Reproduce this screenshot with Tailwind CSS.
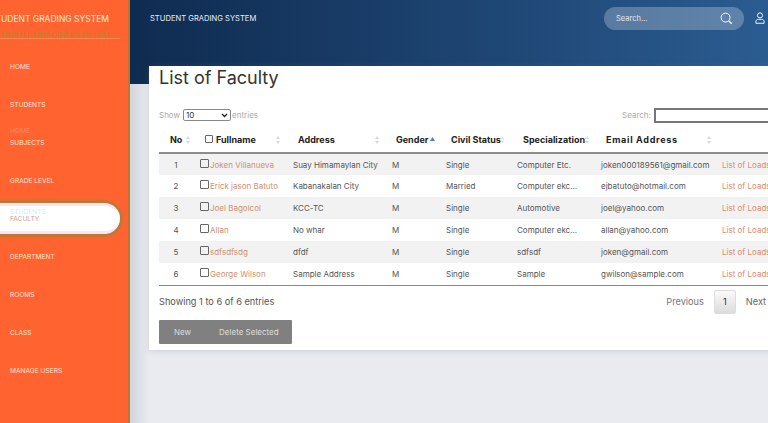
<!DOCTYPE html>
<html><head><meta charset="utf-8"><script src="https://cdn.jsdelivr.net/npm/@tailwindcss/browser@4"></script></head>
<body class="m-0 overflow-hidden">
<div class="flex w-[768px] h-[423px] overflow-hidden bg-[#e9ebf1] font-['Inter','Liberation_Sans',sans-serif] text-[#666]">
<aside class="relative z-10 w-[130px] shrink-0 h-full overflow-hidden bg-[#ff6430] border-r-2 border-[#b5773a] text-white">
  <div class="w-[130px] -ml-[10px] h-[39px] pt-[12px] border-b border-[#f58a50]">
    <p class="text-[8.5px] leading-[14px] whitespace-nowrap text-[#ffe6d8]">STUDENT GRADING SYSTEM</p>
    <p class="text-[8.5px] leading-[14px] mt-[2px] whitespace-nowrap text-[#c8802f]">STUDENT GRADING SYSTEM</p>
  </div>
  <nav class="text-[6.6px] text-[#ffe3d6] leading-[10px]">
    <a class="flex items-center h-[38px] pl-[10px] mt-[9px]">HOME</a>
    <a class="flex items-center h-[38px] pl-[10px]">STUDENTS</a>
    <a class="relative flex items-center h-[38px] pl-[10px]"><span class="absolute left-[10px] top-[2px] text-[#ff8a5a]">HOME</span>SUBJECTS</a>
    <a class="flex items-center h-[38px] pl-[10px]">GRADE LEVEL</a>
    <div class="flex items-center h-[38px]">
      <a class="relative flex items-center h-[31px] w-[120px] -mt-[2px] pt-[2px] pl-[10px] rounded-r-[16px] bg-white text-[#c9a48f] border-y-[3px] border-y-[#fde3f5] shadow-[0_0_2px_3px_#bb7a36]"><span class="absolute left-[10px] top-[1px] text-[#bdf4fb]">STUDENTS</span>FACULTY</a>
    </div>
    <a class="flex items-center h-[38px] pl-[10px]">DEPARTMENT</a>
    <a class="flex items-center h-[38px] pl-[10px]">ROOMS</a>
    <a class="flex items-center h-[38px] pl-[10px]">CLASS</a>
    <a class="flex items-center h-[38px] pl-[10px]">MANAGE USERS</a>
  </nav>
</aside>
<main class="relative flex-1 min-w-0 h-full">
  <header class="h-[84px] bg-gradient-to-r from-[#0f2b50] to-[#2b5c91] flex items-start pl-[20px] text-white">
    <span class="mt-[13px] text-[7.6px] leading-[12px] whitespace-nowrap text-[#e8eef5]">STUDENT GRADING SYSTEM</span>
    <div class="ml-auto mt-[7px] w-[140px] h-[23px] rounded-full bg-white/25 flex items-center justify-between pl-[12px] pr-[11px] text-[7.5px] text-[#e4e9f0]">
      <span>Search...</span>
      <svg class="w-[13px] h-[13px]" viewBox="0 0 14 14" fill="none" stroke="#fff" stroke-width="1"><circle cx="6" cy="6" r="4.8"/><path d="M9.6 9.6L12.6 12.6" stroke-width="1.6"/></svg>
    </div>
    <svg class="ml-[11px] mr-[3px] mt-[12px] w-[10px] h-[12px]" viewBox="0 0 11 13" fill="none" stroke="#fff" stroke-width="1"><circle cx="5.5" cy="3.6" r="2.8"/><path d="M1 12.3V10.5C1 9 2.2 8 3.6 8H7.4C8.8 8 10 9 10 10.5V12.3Z"/></svg>
  </header>
  <div class="absolute left-0 top-[84px] bottom-0 w-[19px] bg-gradient-to-r from-[#d3d5dd] to-[#e9ebf1]"></div>
  <section class="relative -mt-[18px] ml-[19px] w-[640px] h-[284px] bg-white shadow-[0_1px_6px_rgba(120,125,140,0.25)] pl-[10px] overflow-hidden">
    <h1 class="text-[18px] leading-[24px] text-[#333]">List of Faculty</h1>
    <div class="mt-[16px] h-[18px] flex items-center text-[8px] text-[#aaa]">
      <span>Show</span>
      <span class="ml-[3px] w-[48px] shrink-0 h-[12px] border border-[#888] rounded-[2px] flex items-center justify-between px-[2px] text-[#333]">10<svg class="w-[7px] h-[5px]" viewBox="0 0 7 5" fill="none" stroke="#222" stroke-width="1.3"><path d="M1 1l2.5 2.5L6 1"/></svg></span>
      <span class="ml-[1px]">entries</span>
      <span class="ml-[364px]">Search:</span>
      <span class="ml-[3px] w-[130px] h-[15px] shrink-0 border-2 border-[#777] bg-white"></span>
    </div>
    <table class="mt-[3px] table-fixed border-collapse w-[631px] text-[8px] text-[#555] whitespace-nowrap">
      <colgroup><col class="w-[34px]"><col class="w-[92px]"><col class="w-[99px]"><col class="w-[54px]"><col class="w-[71px]"><col class="w-[84px]"><col class="w-[121px]"><col class="w-[76px]"></colgroup>
      <thead class="text-[#222] text-[9px]">
        <tr class="h-[26px] border-b-2 border-[#8c8c8c]">
          <th class="p-0 pt-[1px] pl-[11px] pr-[3px] font-bold"><div class="flex items-center justify-between">No<svg class="w-[4px] h-[8px]" viewBox="0 0 4 8" fill="#d5d8dd"><path d="M2 0l2 3H0zM2 8L0 5h4z"/></svg></div></th>
          <th class="p-0 pt-[1px] pl-[12px] pr-[5px] font-bold"><div class="flex items-center justify-between"><span class="flex items-center gap-[3px]"><span class="w-[8px] h-[8px] -mt-[2px] border border-[#666] rounded-[1px]"></span>Fullname</span><svg class="w-[4px] h-[8px]" viewBox="0 0 4 8" fill="#d5d8dd"><path d="M2 0l2 3H0zM2 8L0 5h4z"/></svg></div></th>
          <th class="p-0 pt-[1px] pl-[13px] pr-[5px] font-bold"><div class="flex items-center justify-between">Address<svg class="w-[4px] h-[8px]" viewBox="0 0 4 8" fill="#d5d8dd"><path d="M2 0l2 3H0zM2 8L0 5h4z"/></svg></div></th>
          <th class="p-0 pt-[1px] pl-[12px] pr-[3px] font-bold"><div class="flex items-center justify-between">Gender<svg class="w-[5px] h-[4px] mb-[3px]" viewBox="0 0 5 4" fill="#6a6fc0"><path d="M2.5 0L5 4H0z"/></svg></div></th>
          <th class="p-0 pt-[1px] pl-[13px] pr-[5px] font-bold"><div class="flex items-center justify-between">Civil Status<svg class="w-[4px] h-[8px]" viewBox="0 0 4 8" fill="#d5d8dd"><path d="M2 0l2 3H0zM2 8L0 5h4z"/></svg></div></th>
          <th class="p-0 pt-[1px] pl-[14px] pr-[4px] font-bold"><div class="flex items-center justify-between">Specialization<svg class="w-[4px] h-[8px]" viewBox="0 0 4 8" fill="#d5d8dd"><path d="M2 0l2 3H0zM2 8L0 5h4z"/></svg></div></th>
          <th class="p-0 pt-[1px] pl-[13px] pr-[3px] font-bold"><div class="flex items-center justify-between"><span class="tracking-[0.7px]">Email Address</span><svg class="w-[4px] h-[8px]" viewBox="0 0 4 8" fill="#d5d8dd"><path d="M2 0l2 3H0zM2 8L0 5h4z"/></svg></div></th>
          <th></th>
        </tr>
      </thead>
      <tbody class="border-b border-[#888]">
        <tr class="h-[22px] bg-[#f2f2f2]"><td class="p-0 text-center">1</td><td class="p-0 pl-[7px]"><span class="inline-flex items-center gap-[1px]"><span class="w-[9px] h-[9px] -mt-[3px] border border-[#666] rounded-[1px]"></span><a class="text-[#cf9070]">Joken Villanueva</a></span></td><td class="p-0 pl-[8px]">Suay Himamaylan City</td><td class="p-0 pl-[8px]">M</td><td class="p-0 pl-[8px]">Single</td><td class="p-0 pl-[8px]">Computer Etc.</td><td class="p-0 pl-[8px]">joken000189561@gmail.com</td><td class="p-0 pl-[8px] text-[#e08a68]">List of Loads</td></tr>
        <tr class="h-[22px]"><td class="p-0 text-center">2</td><td class="p-0 pl-[7px]"><span class="inline-flex items-center gap-[1px]"><span class="w-[9px] h-[9px] -mt-[3px] border border-[#666] rounded-[1px]"></span><a class="text-[#cf9070]">Erick jason Batuto</a></span></td><td class="p-0 pl-[8px]">Kabanakalan City</td><td class="p-0 pl-[8px]">M</td><td class="p-0 pl-[8px]">Married</td><td class="p-0 pl-[8px]">Computer ekc...</td><td class="p-0 pl-[8px]">ejbatuto@hotmail.com</td><td class="p-0 pl-[8px] text-[#e08a68]">List of Loads</td></tr>
        <tr class="h-[22px] bg-[#f2f2f2]"><td class="p-0 text-center">3</td><td class="p-0 pl-[7px]"><span class="inline-flex items-center gap-[1px]"><span class="w-[9px] h-[9px] -mt-[3px] border border-[#666] rounded-[1px]"></span><a class="text-[#cf9070]">Joel Bagolcol</a></span></td><td class="p-0 pl-[8px]">KCC-TC</td><td class="p-0 pl-[8px]">M</td><td class="p-0 pl-[8px]">Single</td><td class="p-0 pl-[8px]">Automotive</td><td class="p-0 pl-[8px]">joel@yahoo.com</td><td class="p-0 pl-[8px] text-[#e08a68]">List of Loads</td></tr>
        <tr class="h-[22px]"><td class="p-0 text-center">4</td><td class="p-0 pl-[7px]"><span class="inline-flex items-center gap-[1px]"><span class="w-[9px] h-[9px] -mt-[3px] border border-[#666] rounded-[1px]"></span><a class="text-[#cf9070]">Allan</a></span></td><td class="p-0 pl-[8px]">No whar</td><td class="p-0 pl-[8px]">M</td><td class="p-0 pl-[8px]">Single</td><td class="p-0 pl-[8px]">Computer ekc...</td><td class="p-0 pl-[8px]">allan@yahoo.com</td><td class="p-0 pl-[8px] text-[#e08a68]">List of Loads</td></tr>
        <tr class="h-[22px] bg-[#f2f2f2]"><td class="p-0 text-center">5</td><td class="p-0 pl-[7px]"><span class="inline-flex items-center gap-[1px]"><span class="w-[9px] h-[9px] -mt-[3px] border border-[#666] rounded-[1px]"></span><a class="text-[#cf9070]">sdfsdfsdg</a></span></td><td class="p-0 pl-[8px]">dfdf</td><td class="p-0 pl-[8px]">M</td><td class="p-0 pl-[8px]">Single</td><td class="p-0 pl-[8px]">sdfsdf</td><td class="p-0 pl-[8px]">joken@gmail.com</td><td class="p-0 pl-[8px] text-[#e08a68]">List of Loads</td></tr>
        <tr class="h-[22px]"><td class="p-0 text-center">6</td><td class="p-0 pl-[7px]"><span class="inline-flex items-center gap-[1px]"><span class="w-[9px] h-[9px] -mt-[3px] border border-[#666] rounded-[1px]"></span><a class="text-[#cf9070]">George Wilson</a></span></td><td class="p-0 pl-[8px]">Sample Address</td><td class="p-0 pl-[8px]">M</td><td class="p-0 pl-[8px]">Single</td><td class="p-0 pl-[8px]">Sample</td><td class="p-0 pl-[8px]">gwilson@sample.com</td><td class="p-0 pl-[8px] text-[#e08a68]">List of Loads</td></tr>
      </tbody>
    </table>
    <div class="mt-[4px] h-[25px] flex items-center text-[9.2px] text-[#555]">
      <span>Showing 1 to 6 of 6 entries</span>
      <span class="ml-[392px] text-[#777]">Previous</span>
      <span class="ml-[10px] w-[22px] h-[24px] flex items-center justify-center border border-[#ddd] rounded-[2px] bg-gradient-to-b from-[#fafafa] to-[#dcdcdc] text-[#333]">1</span>
      <span class="ml-[10px] text-[#666]">Next</span>
    </div>
    <div class="mt-[5px] w-[133px] h-[24px] bg-[#808080] rounded-[1px] flex items-center text-[8px] text-[#ddd]">
      <span class="ml-[15px]">New</span><span class="ml-[28px]">Delete Selected</span>
    </div>
  </section>
</main>
</div>
</body></html>
